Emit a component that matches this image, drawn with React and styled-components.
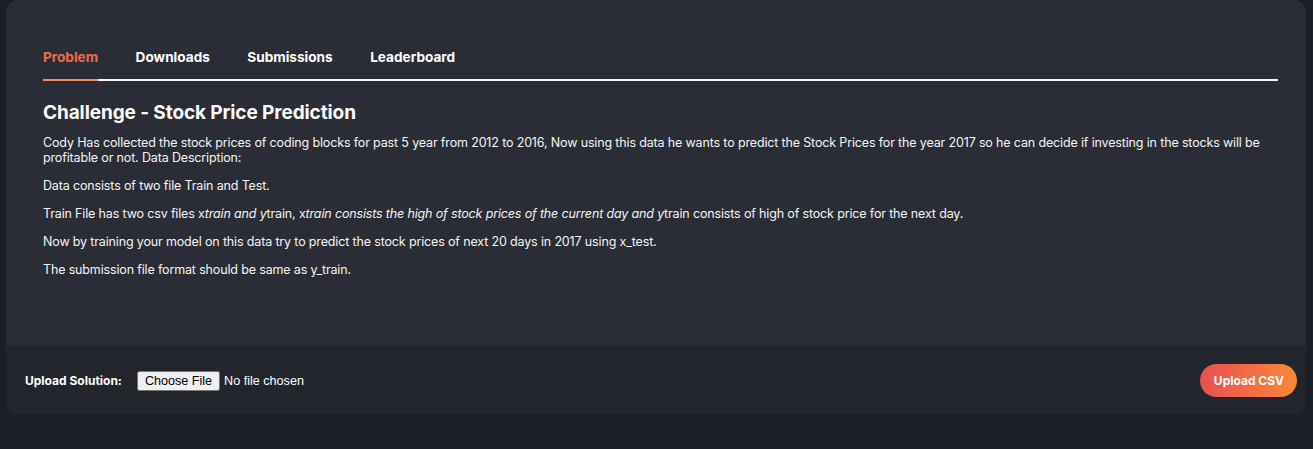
import React from 'react';
import styled, { createGlobalStyle } from 'styled-components';

const GlobalStyle = createGlobalStyle`
  html, body {
    margin: 0;
    padding: 0;
    background-color: #1c1e25;
  }
  body {
    font-family: Inter, "Noto Sans", sans-serif;
    color: #ffffff;
  }
`;

const Page = styled.div`
  padding: 0 7px 34px 6px;
`;

const Card = styled.div`
  border-radius: 12px;
  overflow: hidden;
  background-color: #23252c;
`;

const Body = styled.div`
  background-color: #2a2d35;
  padding: 49px 28px 0 37px;
  height: 346px;
  box-sizing: border-box;
`;

const Tabs = styled.div`
  display: flex;
  gap: 37.5px;
  border-bottom: 2px solid #f2f2f2;
`;

const Tab = styled.div`
  font-size: 13.6px;
  font-weight: 700;
  padding-bottom: 14px;
  margin-bottom: -2px;
  color: ${p => (p.$active ? '#f26a4b' : '#ffffff')};
  border-bottom: 2px solid ${p => (p.$active ? '#f58a6a' : 'transparent')};
`;

const Title = styled.h2`
  margin: 20px 0 11px;
  font-size: 19px;
  font-weight: 700;
  letter-spacing: -0.1px;
`;

const Text = styled.p`
  margin: 0 0 13px;
  font-size: 12.5px;
  line-height: 15px;
  letter-spacing: -0.15px;
  color: #f4f4f4;
`;

const Footer = styled.div`
  display: flex;
  align-items: center;
  height: 69px;
  padding: 0 9px 0 19px;
`;

const Label = styled.span`
  font-size: 12px;
  font-weight: 700;
  margin-right: 15px;
`;

const FileInput = styled.input`
  font-family: "Liberation Sans", Arial, sans-serif;
  font-size: 12.6px;
  color: #ffffff;
`;

const UploadButton = styled.button`
  margin-left: auto;
  border: none;
  border-radius: 17px;
  height: 33px;
  padding: 0 13px 0 14px;
  font-family: Inter, sans-serif;
  font-size: 12px;
  font-weight: 700;
  color: #ffffff;
  background: linear-gradient(90deg, #e84f4f 0%, #fb8838 100%);
`;

const tabs = ['Problem', 'Downloads', 'Submissions', 'Leaderboard'];

export default function App() {
  return (
    <>
      <GlobalStyle />
      <Page>
        <Card>
          <Body>
            <Tabs>
              {tabs.map((t, i) => (
                <Tab key={t} $active={i === 0}>{t}</Tab>
              ))}
            </Tabs>
            <Title>Challenge - Stock Price Prediction</Title>
            <Text>
              Cody Has collected the stock prices of coding blocks for past 5 year from 2012 to 2016, Now using this data he wants to predict the Stock Prices for the year 2017 so he can decide if investing in the stocks will be profitable or not. Data Description:
            </Text>
            <Text>Data consists of two file Train and Test.</Text>
            <Text>
              Train File has two csv files x<em>train and y</em>train, x<em>train consists the high of stock prices of the current day and y</em>train consists of high of stock price for the next day.
            </Text>
            <Text>Now by training your model on this data try to predict the stock prices of next 20 days in 2017 using x_test.</Text>
            <Text>The submission file format should be same as y_train.</Text>
          </Body>
          <Footer>
            <Label>Upload Solution:</Label>
            <FileInput type="file" />
            <UploadButton>Upload CSV</UploadButton>
          </Footer>
        </Card>
      </Page>
    </>
  );
}
